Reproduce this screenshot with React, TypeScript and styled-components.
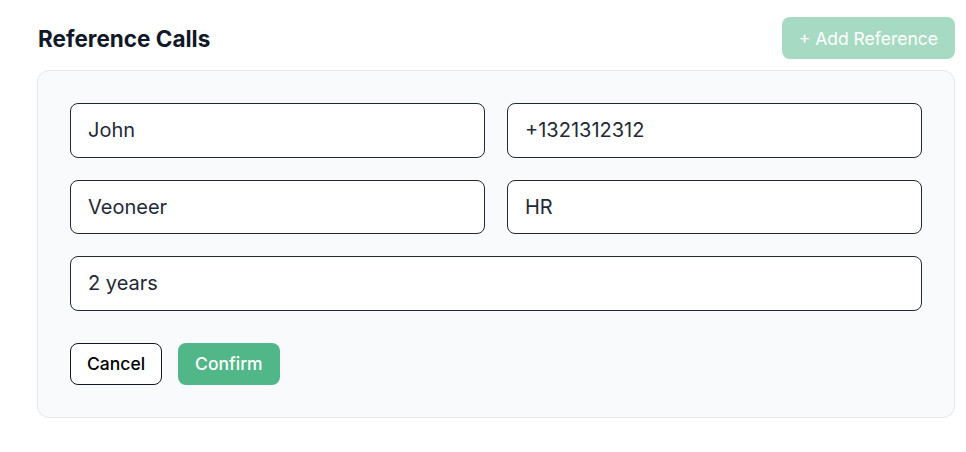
import styled, { createGlobalStyle } from 'styled-components';

const GlobalStyle = createGlobalStyle`
  body {
    margin: 0;
    background: #ffffff;
    font-family: Inter, 'Noto Sans', sans-serif;
  }
  * {
    box-sizing: border-box;
  }
`;

const Page = styled.div`
  padding: 17px 11px 0 37px;
  width: 966px;
`;

const Header = styled.div`
  display: flex;
  align-items: center;
  justify-content: space-between;
  height: 42px;
  margin-bottom: 11px;
`;

const Title = styled.h2`
  margin: 0 0 0 1px;
  font-size: 22.5px;
  font-weight: 700;
  color: #111827;
`;

const Button = styled.button<{ $variant: 'primary' | 'outline'; $faded?: boolean }>`
  height: 42px;
  padding: 0 16px;
  border-radius: 8px;
  font-family: inherit;
  font-size: 17.5px;
  font-weight: ${({ $faded }) => ($faded ? 400 : 500)};
  cursor: pointer;
  border: 1px solid ${({ $variant }) => ($variant === 'outline' ? '#111827' : 'transparent')};
  background: ${({ $variant }) => ($variant === 'outline' ? '#ffffff' : '#52b788')};
  color: ${({ $variant }) => ($variant === 'outline' ? '#000000' : '#ffffff')};
  opacity: ${({ $faded }) => ($faded ? 0.5 : 1)};
`;

const Card = styled.div`
  width: 918px;
  border: 1px solid #e5e7eb;
  border-radius: 12px;
  background: #f9fafb;
  padding: 32px;
`;

const Grid = styled.div`
  display: grid;
  grid-template-columns: 1fr 1fr;
  gap: 22px;
`;

const Input = styled.input<{ $wide?: boolean }>`
  grid-column: ${({ $wide }) => ($wide ? '1 / -1' : 'auto')};
  height: 54.5px;
  border: 1px solid #1f2937;
  border-radius: 8px;
  background: #ffffff;
  padding: 0 17px;
  font-family: inherit;
  font-size: 20px;
  color: #1f2937;
  outline: none;
`;

const Actions = styled.div`
  display: flex;
  gap: 16px;
  margin-top: 32px;
`;

export default function App() {
  return (
    <Page>
      <GlobalStyle />
      <Header>
        <Title>Reference Calls</Title>
        <Button $variant="primary" $faded>
          + Add Reference
        </Button>
      </Header>
      <Card>
        <Grid>
          <Input defaultValue="John" />
          <Input defaultValue="+1321312312" />
          <Input defaultValue="Veoneer" />
          <Input defaultValue="HR" />
          <Input $wide defaultValue="2 years" />
        </Grid>
        <Actions>
          <Button $variant="outline">Cancel</Button>
          <Button $variant="primary">Confirm</Button>
        </Actions>
      </Card>
    </Page>
  );
}
